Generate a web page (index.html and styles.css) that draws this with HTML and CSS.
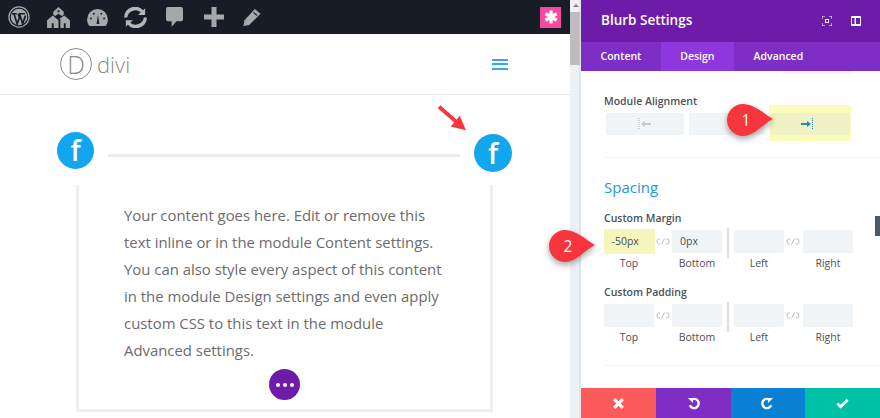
FILE: index.html
```html
<!DOCTYPE html>
<html lang="en">
<head>
<meta charset="utf-8">
<title>Blurb Settings</title>
<link rel="stylesheet" href="styles.css">
</head>
<body>
<div class="app">
  <main class="preview">
    <div class="adminbar">
      <div class="admin-icons">
        <svg class="ai ai-wp" viewBox="0 0 24 24"><circle cx="12" cy="12" r="11" fill="none" stroke="#a5a7aa" stroke-width="1.400"/><circle cx="12" cy="12" r="9" fill="#a5a7aa"/><path d="M4.500 8.500h5M12 8.500h6.500M6.500 8.500l3.500 11 2.500-7-1.500-4M12.500 8.500l3.500 11 3-9" fill="none" stroke="#171c26" stroke-width="1.800"/></svg>
        <svg class="ai ai-home" viewBox="0 0 26 22"><path d="M13 0l5.500 5v3l-2 1.500L13 7 9.500 9.500l-2-1.500V5zM7 9l6 5v8H1v-8zM19 9l6 5v8h-10v-8.800l-1-.800z" fill="#a5a7aa"/><path d="M6 17h2v5H6zM18.500 17h2v5h-2zM12 3.500h2v2h-2z" fill="#171c26"/></svg>
        <svg class="ai ai-gauge" viewBox="0 0 22 18"><path d="M11 0a11 11 0 0 1 11 11c0 3-1 5-2.500 7h-17C1 16 0 14 0 11A11 11 0 0 1 11 0z" fill="#a5a7aa"/><path d="M10 16l1.500-10 1.500 10z" fill="#171c26"/><circle cx="4" cy="10" r="1" fill="#171c26"/><circle cx="7" cy="5" r="1" fill="#171c26"/><circle cx="15" cy="5" r="1" fill="#171c26"/><circle cx="18" cy="10" r="1" fill="#171c26"/></svg>
        <svg class="ai ai-sync" viewBox="0 0 28 24"><path d="M4.500 12a9.500 9.500 0 0 1 15.500-6l-3 3h8V1.500l-2.300 2.300A12.500 12.500 0 0 0 1 12zM23.500 12a9.500 9.500 0 0 1-15.500 6l3-3H3v7.500l2.300-2.300A12.500 12.500 0 0 0 27 12z" fill="#b4b6b9"/></svg>
        <svg class="ai ai-comment" viewBox="0 0 18 21"><path d="M2 0h14a2 2 0 0 1 2 2v11a2 2 0 0 1-2 2h-5l-5 6v-6H2a2 2 0 0 1-2-2V2a2 2 0 0 1 2-2z" fill="#a5a7aa"/></svg>
        <svg class="ai ai-plus" viewBox="0 0 20 20"><path d="M7.500 0h5v7.500H20v5h-7.500V20h-5v-7.500H0v-5h7.500z" fill="#a5a7aa"/></svg>
        <svg class="ai ai-pen" viewBox="0 0 18 18"><path d="M12 0l6 5L6 17l-6 1 1-6z" fill="#a5a7aa"/><path d="M10.500 3.500l4 3.500" stroke="#171c26" stroke-width="1.200"/></svg>
      </div>
      <div class="asterisk"><svg viewBox="0 0 12 12"><path d="M6 .5v11M1.200 3.200l9.600 5.600M10.800 3.200L1.200 8.800" stroke="#fff" stroke-width="2.800"/></svg></div>
    </div>
    <header class="site-header">
      <div class="logo"><span class="logo-d">D</span><span class="logo-word">divi</span></div>
      <div class="burger"><i></i><i></i><i></i></div>
    </header>
    <section class="content">
      <div class="blurb-head">
        <div class="fb"><span>f</span></div>
        <div class="rule"></div>
        <div class="fb fb-right"><span>f</span></div>
      </div>
      <div class="box">
        <p>Your content goes here. Edit or remove this text inline or in the module Content settings. You can also style every aspect of this content in the module Design settings and even apply custom CSS to this text in the module Advanced settings.</p>
        <div class="dots"><i></i><i></i><i></i></div>
      </div>
      <svg class="red-arrow" viewBox="0 0 34 30"><path d="M2 2l22 19" stroke="#f9353d" stroke-width="4.200" fill="none"/><path d="M32 28l-17-4 10-12z" fill="#f9353d"/></svg>
    </section>
  </main>
  <div class="page-scroll"><span class="up"></span><span class="thumb"></span></div>
  <aside class="settings">
    <div class="s-title">
      <h1>Blurb Settings</h1>
      <div class="s-actions">
        <svg viewBox="0 0 10 10" class="act"><path d="M0 3V0h3M7 0h3v3M10 7v3H7M3 10H0V7" fill="none" stroke="#fff"/><rect x="3.500" y="3.500" width="3" height="3" fill="none" stroke="#fff"/></svg>
        <svg viewBox="0 0 10 10" class="act"><rect width="10" height="10" rx="1" fill="#fff"/><path d="M1 2h2.500v6H1zM5 2h4v6H5z" fill="#6c1ca9"/></svg>
      </div>
    </div>
    <nav class="tabs">
      <span class="tab">Content</span><span class="tab tab-on">Design</span><span class="tab">Advanced</span>
    </nav>
    <div class="s-body">
      <div class="stub"></div>
      <div class="group group-al">
        <div class="lbl">Module Alignment</div>
        <div class="aligns">
          <div class="al al-left"><svg viewBox="0 0 14 12"><path d="M1 0v12" stroke="#a9b4bc" stroke-dasharray="1 1"/><path d="M3 6l4-3v2h6v2H7v2z" fill="#c2c9ce"/></svg></div>
          <div class="al al-mid"></div>
          <div class="al-hi"><div class="al al-right"><svg viewBox="0 0 14 12"><path d="M1 5h6V3l4 3-4 3V7H1z" fill="#2b87ad"/><path d="M12.500 0v12" stroke="#2b87ad" stroke-dasharray="1 1"/></svg></div></div>
        </div>
      </div>
      <div class="group group-sp">
        <h2>Spacing</h2>
        <div class="lbl">Custom Margin</div>
        <div class="fields">
          <div class="f f-hi"><div class="inp inp-hi">-50px</div><span>Top</span></div>
          <svg class="lnk" viewBox="0 0 14 7"><path d="M4 1H2.500Q1 1 1 3.500T2.500 6H4M5.500 6.500l3-6M10 1h1.500Q13 1 13 3.500T11.500 6H10" fill="none" stroke="#b7bfc5"/></svg>
          <div class="f"><div class="inp">0px</div><span>Bottom</span></div>
          <div class="vr"></div>
          <div class="f"><div class="inp"></div><span>Left</span></div>
          <svg class="lnk" viewBox="0 0 14 7"><path d="M4 1H2.500Q1 1 1 3.500T2.500 6H4M5.500 6.500l3-6M10 1h1.500Q13 1 13 3.500T11.500 6H10" fill="none" stroke="#b7bfc5"/></svg>
          <div class="f"><div class="inp"></div><span>Right</span></div>
        </div>
        <div class="lbl lbl-pad">Custom Padding</div>
        <div class="fields">
          <div class="f"><div class="inp"></div><span>Top</span></div>
          <svg class="lnk" viewBox="0 0 14 7"><path d="M4 1H2.500Q1 1 1 3.500T2.500 6H4M5.500 6.500l3-6M10 1h1.500Q13 1 13 3.500T11.500 6H10" fill="none" stroke="#b7bfc5"/></svg>
          <div class="f"><div class="inp"></div><span>Bottom</span></div>
          <div class="vr"></div>
          <div class="f"><div class="inp"></div><span>Left</span></div>
          <svg class="lnk" viewBox="0 0 14 7"><path d="M4 1H2.500Q1 1 1 3.500T2.500 6H4M5.500 6.500l3-6M10 1h1.500Q13 1 13 3.500T11.500 6H10" fill="none" stroke="#b7bfc5"/></svg>
          <div class="f"><div class="inp"></div><span>Right</span></div>
        </div>
      </div>
      <span class="s-thumb"></span>
      <div class="pin pin-1"><svg viewBox="0 0 46 32"><path d="M16 0C27 0 36 9 46 15 36 20 27 32 16 32A16 16 0 0 1 16 0z" fill="#f7353d"/></svg><span>1</span></div>
      <div class="pin pin-2"><svg viewBox="0 0 46 32"><path d="M16 0C27 0 36 9 46 15 36 20 27 32 16 32A16 16 0 0 1 16 0z" fill="#f7353d"/></svg><span>2</span></div>
    </div>
    <div class="actions">
      <div class="ab ab-red"><svg viewBox="0 0 12 12"><path d="M2 2l8 8M10 2l-8 8" stroke="#fff" stroke-width="3"/></svg></div>
      <div class="ab ab-purple"><svg viewBox="0 0 14 14"><path d="M4 3.500A5 5 0 1 1 3 9" fill="none" stroke="#fff" stroke-width="2.600"/><path d="M1 1h5.500v5.500z" fill="#fff"/></svg></div>
      <div class="ab ab-blue"><svg viewBox="0 0 14 14"><path d="M10 3.500A5 5 0 1 0 11 9" fill="none" stroke="#fff" stroke-width="2.600"/><path d="M13 1H7.500v5.500z" fill="#fff"/></svg></div>
      <div class="ab ab-teal"><svg viewBox="0 0 14 12"><path d="M1.500 6l3.500 3.500 7.500-7.500" fill="none" stroke="#fff" stroke-width="3"/></svg></div>
    </div>
  </aside>
</div>
</body>
</html>
```
FILE: styles.css
```css
* { box-sizing: border-box; }
html, body { margin: 0; padding: 0; }
body { width: 880px; height: 418px; overflow: hidden; background: #fff; font-family: "Open Sans", sans-serif; }
.app { display: flex; width: 880px; height: 418px; }

.preview { width: 570px; height: 418px; display: flex; flex-direction: column; overflow: hidden; }
.adminbar { height: 34px; background: #171c26; display: flex; align-items: center; justify-content: space-between; padding: 0 9px 0 8px; flex: none; }
.admin-icons { display: flex; align-items: center; }
.ai { display: block; flex: none; }
.ai-wp { width: 22px; height: 22px; margin-right: 16px; }
.ai-home { width: 25px; height: 21px; margin-right: 16px; }
.ai-gauge { width: 21px; height: 17px; margin-right: 14px; }
.ai-sync { width: 27px; height: 21px; margin-right: 17px; }
.ai-comment { width: 17px; height: 20px; margin-right: 21px; }
.ai-plus { width: 20px; height: 20px; margin-right: 19px; }
.ai-pen { width: 18px; height: 17px; }
.asterisk { width: 21px; height: 21px; background: #f6489c; display: flex; align-items: center; justify-content: center; }
.asterisk svg { display: block; width: 14px; height: 14px; }
.site-header { height: 61px; border-bottom: 1px solid #e8e8e8; display: flex; align-items: center; justify-content: space-between; padding: 0 62px 0 60px; flex: none; }
.logo { display: flex; align-items: center; gap: 5px; color: #8a8a8a; }
.logo-d { width: 32px; height: 32px; border: 1px solid #8a8a8a; border-radius: 50%; display: flex; align-items: center; justify-content: center; font: 300 25px/1 "Open Sans", sans-serif; }
.logo-word { font: 300 22px/1 "Open Sans", sans-serif; }
.burger { display: flex; flex-direction: column; gap: 2.500px; width: 16px; }
.burger i { display: block; height: 2px; background: #3aa7e6; }
.content { position: relative; flex: 1; }
.blurb-head { display: flex; align-items: flex-start; height: 90px; padding: 37px 58px 0 57px; }
.fb { width: 37px; height: 37px; border-radius: 50%; background: #12a5f0; color: #fff; display: flex; align-items: center; justify-content: center; flex: none; }
.fb span { font: 600 28px/37px "Open Sans", sans-serif; }
.fb-right { width: 38px; height: 38px; margin-top: 2px; }
.rule { flex: 1; height: 3px; background: #eaebed; margin: 22px 14px 0 14px; }
.box { position: relative; width: 417px; height: 227px; margin-left: 76px; border: 3px solid #eeefef; border-top: 0; padding: 17px 41px 0 45px; }
.box p { margin: 0; font-size: 14.900px; line-height: 27px; color: #6c6c6c; }
.dots { position: absolute; left: 190px; top: 184px; width: 31px; height: 31px; border-radius: 50%; background: #6c1ca9; display: flex; align-items: center; justify-content: center; gap: 3px; }
.dots i { width: 4px; height: 4px; border-radius: 50%; background: #fff; }
.red-arrow { position: absolute; left: 436px; top: 10px; width: 33px; height: 27px; }

.page-scroll { position: relative; width: 11px; height: 418px; flex: none; background-image: linear-gradient(90deg, #eef1f3 0 9px, #dfe6ec 9px); }
.page-scroll .up { position: absolute; left: 3px; top: 4px; border: 3px solid transparent; border-bottom: 3px solid #7f7f7f; border-top: 0; }
.page-scroll .thumb { position: absolute; left: 0; top: 12px; width: 10px; height: 53px; background: #bdbdbd; }

.settings { width: 299px; height: 418px; display: flex; flex-direction: column; flex: none; background: #fff; }
.s-title { height: 42px; background: #6c1ca9; display: flex; align-items: center; justify-content: space-between; padding: 0 19px 0 20px; flex: none; }
.s-title h1 { margin: 0; font: 600 13.500px/1 "Open Sans", sans-serif; color: #fff; }
.s-actions { display: flex; gap: 19px; align-items: center; }
.act { width: 10px; height: 10px; display: block; }
.tabs { height: 29px; background: #7e2ec4; display: flex; flex: none; }
.tab { display: flex; align-items: center; padding: 0 19.500px; font: 600 10.500px/1 "Open Sans", sans-serif; color: #fff; }
.tab-on { background: #8e37dc; }
.s-body { position: relative; flex: 1; padding: 0 0 0 23px; }
.stub { width: 69px; height: 3px; background: #f2f5f8; margin-left: 179px; }
.lbl { font: 600 10.500px/14px "Open Sans", sans-serif; color: #4b5157; }
.group-al { padding-top: 20px; height: 84px; border-bottom: 1px solid #f3f4f5; width: 275px; }
.aligns { display: flex; gap: 5px; align-items: flex-start; }
.al { height: 22px; background: #f0f4f7; border-radius: 2px; display: flex; align-items: center; justify-content: center; }
.al svg { width: 14px; height: 12px; display: block; }
.al-left { width: 78px; margin-left: 2px; margin-top: 5px; }
.al-mid { width: 75px; margin-top: 5px; }
.al-hi { margin-top: -3px; background: #fdfbb9; padding: 8px 1px 6px 2px; width: 82px; height: 36px; }
.al-right { width: 79px; background: #eef2c6; justify-content: flex-end; padding-right: 36px; }
.group-sp { padding-top: 19px; width: 275px; border-bottom: 1px solid #f3f4f5; height: 208px; }
h2 { margin: 0 0 14px 0; font: 400 15px/20px "Open Sans", sans-serif; color: #1d98dd; }
.fields { display: flex; align-items: flex-start; margin-top: 5px; width: 251px; }
.f { width: 50px; display: flex; flex-direction: column; align-items: center; flex: none; }
.f span { font: 400 10.500px/14px "Open Sans", sans-serif; color: #4b5157; margin-top: 3px; }
.inp { width: 50px; height: 23px; background: #f0f4f7; border-radius: 2px; font: 400 10.500px/23px "Open Sans", sans-serif; color: #4b5157; padding-left: 8px; }
.inp-hi { width: 51px; background: #f5f6bb; height: 25px; margin-top: -1px; border-radius: 0; line-height: 25px; }
.f-hi span { margin-top: 2px; }
.lnk { width: 14px; height: 7px; margin: 8px 2px 0; flex: none; }
.vr { width: 2px; height: 30px; background: #dcdedf; margin: -2px 5px 0 5px; flex: none; }
.vr ~ .lnk { margin-right: 3px; }
.lbl-pad { margin-top: 15px; }
.s-thumb { position: absolute; right: 0; top: 145px; width: 5px; height: 20px; background: #4e5865; }
.pin { position: absolute; width: 46px; height: 32px; }
.pin svg { display: block; width: 46px; height: 32px; filter: drop-shadow(0 3px 3px rgba(0,0,0,.35)); }
.pin span { position: absolute; left: 0; top: 0; width: 38px; text-align: center; color: #fff; font: 400 15.500px/32px "Open Sans", sans-serif; }
.pin-1 { left: 146px; top: 33px; }
.pin-2 { left: -32px; top: 159px; }
.actions { display: flex; height: 30px; flex: none; }
.ab { width: 25%; display: flex; align-items: center; justify-content: center; }
.ab svg { width: 13px; height: 13px; display: block; }
.ab-red { background: #fb5a5a; }
.ab-purple { background: #7e2ec4; }
.ab-blue { background: #0a80d4; }
.ab-teal { background: #00c1a5; }
```
